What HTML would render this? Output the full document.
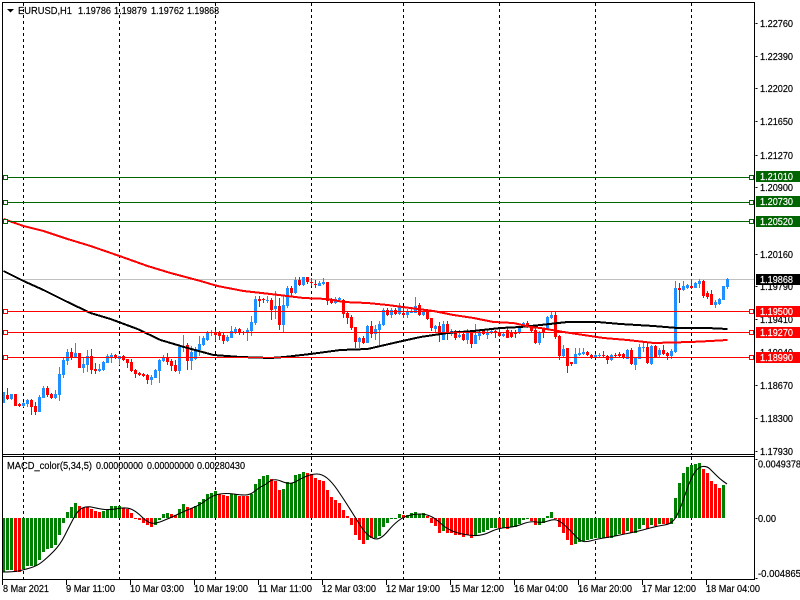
<!DOCTYPE html>
<html><head><meta charset="utf-8"><style>
html,body{margin:0;padding:0;background:#fff;width:800px;height:600px;overflow:hidden}
svg{display:block}
text{font-family:"Liberation Sans",sans-serif;font-size:10px;fill:#000;stroke:#000;stroke-width:.18px}
text.w{fill:#fff;stroke:#fff}
</style></head><body>
<svg width="800" height="600" viewBox="0 0 800 600" xmlns="http://www.w3.org/2000/svg">
<rect width="800" height="600" fill="#fff"/>
<g transform="translate(.5,0)" shape-rendering="crispEdges" fill="none">
<!-- grid -->
<path stroke="#000" stroke-dasharray="3 3" d="M23 3V454M119 3V454M215 3V454M311 3V454M403 3V454M499 3V454M595 3V454M691 3V454M23 457V579M119 457V579M215 457V579M311 457V579M403 457V579M499 457V579M595 457V579M691 457V579"/>
<!-- bid -->
<path stroke="#c0c0c0" d="M3 279.5H754"/>
<!-- candles -->
<path stroke="#1e90ff" d="M3 392V403M11 394V400M23 402V407M27 399V407M39 395V412M43 386V398M55 390V399M59 367V401M63 357V378M67 349V365M75 343V358M83 357V373M87 350V372M99 364V372M103 361V371M107 354V363M111 353V363M119 356V365M151 375V385M155 369V378M159 359V383M163 355V362M179 345V374M183 335V352M191 346V370M195 347V360M199 336V356M203 336V346M207 331V341M211 330V336M227 335V342M231 326V338M235 327V334M247 328V341M251 316V336M255 296V325M267 296V303M275 291V319M283 296V332M287 286V308M295 277V294M303 277V286M319 281V286M323 278V285M335 297V304M339 297V301M359 337V348M367 325V343M375 325V340M379 321V347M383 308V326M391 308V318M399 303V315M407 309V318M411 307V313M415 297V313M423 309V316M435 325V332M443 321V340M451 329V336M459 330V338M467 329V344M475 324V344M479 329V340M487 330V339M491 329V334M503 332V337M519 327V334M523 322V326M539 331V345M547 316V330M551 312V319M563 345V357M575 348V364M579 348V356M583 348V355M595 354V358M599 353V357M611 354V361M627 349V359M635 357V370M639 344V359M643 343V352M651 345V365M659 348V358M671 349V359M675 281V353M683 281V291M687 284V289M695 282V288M699 279V288M715 300V308M719 298V305M723 286V300M727 278V289"/>
<path stroke="#1e90ff" stroke-width="3" d="M3 392V403M11 394V399M23 403V406M27 400V404M39 397V412M43 388V398M55 394V398M59 374V395M63 360V375M67 352V361M75 353V357M83 364V368M87 356V365M99 369V371M103 362V370M107 356V363M111 355V357M119 356V359M151 377V380M155 370V378M159 360V371M163 357V361M179 347V371M183 346V348M191 352V361M195 349V359M199 344V350M203 338V345M207 333V340M211 332V333M227 337V341M231 331V338M235 329V332M247 330V333M251 322V331M255 299V323M267 300V301M275 306V309M283 305V325M287 288V306M295 280V293M303 277V285M319 283V286M323 282V284M335 299V303M339 298V300M359 338V342M367 326V343M375 329V334M379 324V330M383 310V325M391 310V315M399 307V314M407 311V315M411 311V313M415 306V313M423 311V315M435 326V329M443 324V340M451 331V334M459 335V337M467 333V340M475 335V344M479 333V336M487 333V335M491 331V333M503 334V336M519 328V333M523 323V325M539 332V343M547 317V329M551 315V318M563 349V356M575 354V364M579 353V355M583 352V354M595 355V357M599 355V356M611 355V360M627 350V359M635 358V365M639 347V359M643 347V348M651 346V364M659 350V355M671 351V356M675 288V352M683 286V290M687 285V288M695 283V288M699 281V284M715 302V305M719 299V304M723 286V300M727 279V287"/>
<path stroke="#f00" d="M7 388V400M15 394V406M19 403V407M31 399V415M35 402V415M47 386V397M51 393V399M71 348V360M79 353V368M91 349V374M95 363V374M115 354V359M123 355V361M127 359V368M131 359V372M135 369V378M139 372V376M143 373V377M147 374V384M167 353V365M171 359V371M175 360V372M187 343V370M215 330V341M219 331V340M223 333V344M239 328V335M243 331V335M259 296V307M263 298V303M271 298V320M279 298V330M291 286V297M299 277V286M307 277V284M311 278V286M315 280V288M327 282V305M331 298V304M343 299V318M347 311V324M351 315V330M355 327V348M363 336V344M371 321V338M387 308V316M395 308V315M403 307V318M419 303V316M427 309V320M431 318V331M439 322V342M447 321V340M455 330V340M463 331V341M471 330V348M483 329V335M495 330V338M499 329V337M507 328V338M511 330V338M515 330V338M527 321V328M531 326V332M535 328V344M543 328V338M555 312V339M559 335V360M567 348V373M571 362V366M587 351V356M591 354V359M603 351V357M607 355V364M615 353V357M619 352V357M623 353V359M631 348V365M647 343V364M655 345V358M663 345V355M667 352V360M679 283V303M691 279V289M703 280V298M707 291V299M711 290V305"/>
<path stroke="#f00" stroke-width="3" d="M7 395V399M15 394V406M19 404V406M31 400V407M35 406V412M47 388V395M51 394V398M71 352V358M79 353V368M91 356V370M95 369V371M115 355V358M123 356V360M127 359V363M131 362V371M135 370V374M139 373V375M143 374V376M147 375V380M167 358V362M171 361V366M175 365V371M187 345V361M215 332V335M219 332V336M223 335V341M239 329V333M243 332V333M259 299V301M263 299V300M271 300V310M279 306V325M291 288V293M299 280V285M307 277V282M311 282V283M315 284V285M327 282V301M331 299V303M343 300V314M347 313V318M351 317V328M355 327V342M363 338V343M371 326V334M387 310V315M395 310V314M403 313V315M419 305V315M427 310V319M431 318V328M439 326V335M447 324V334M455 331V338M463 334V340M471 332V344M483 331V334M495 331V332M499 333V336M507 330V338M511 333V337M515 333V334M527 323V326M531 327V331M535 330V343M543 329V332M555 315V337M559 336V356M567 348V366M571 362V364M587 352V355M591 355V357M603 355V356M607 356V360M615 355V356M619 354V356M623 354V358M631 350V364M647 347V363M655 346V357M663 350V354M667 353V356M679 288V290M691 286V288M703 281V296M707 293V297M711 294V305"/>
<!-- moving averages -->
<polyline stroke="#000" stroke-width="2" points="3,271 23,281 43,290 67,302 90,313 110,319 137,329 160,340 187,348 213,355 240,357 270,358 284,357 310,354 340,350 367,349 393,343 420,337 447,333 473,331 500,328 520,327 540,325 567,322 597,322 620,324 653,326 677,328 683,328 707,328 727,329"/>
<polyline stroke="#f00" stroke-width="2" points="3,219 23,226 43,231 67,239 90,246 119,256 147,266 170,273 200,281 217,286 243,291 270,294 303,298 327,299 343,302 367,303 387,305 410,308 433,311 453,315 473,318 493,322 513,323 530,327 540,328 563,332 583,335 603,338 627,340 653,343 690,342 710,341 727,340"/>
<!-- level lines -->
<path stroke="#006400" d="M3 177.5H754M3 202.5H754M3 221.5H754"/>
<path stroke="#f00" d="M3 311.5H754M3 332.5H754M3 357.5H754"/>
<g stroke="#006400" fill="#fff"><rect x="3" y="175.5" width="4" height="4"/><rect x="3" y="200.5" width="4" height="4"/><rect x="3" y="219.5" width="4" height="4"/><rect x="749" y="175.5" width="4" height="4"/><rect x="749" y="200.5" width="4" height="4"/><rect x="749" y="219.5" width="4" height="4"/></g>
<g stroke="#f00" fill="#fff"><rect x="3" y="309.5" width="4" height="4"/><rect x="3" y="330.5" width="4" height="4"/><rect x="3" y="355.5" width="4" height="4"/><rect x="749" y="309.5" width="4" height="4"/><rect x="749" y="330.5" width="4" height="4"/><rect x="749" y="355.5" width="4" height="4"/></g>
<!-- MACD histogram -->
<path stroke="#008000" stroke-width="3" d="M3 518V572M7 518V570M11 518V570M23 518V569M27 518V566M31 518V566M35 518V566M39 518V560M43 518V552M47 518V549M51 518V548M55 518V545M59 518V535M63 518V523M67 518V512M71 518V507M75 518V503M103 518V511M107 518V509M111 518V506M115 518V506M119 518V506M155 518V525M159 518V520M163 518V514M167 518V513M179 518V509M183 518V504M195 518V506M199 518V502M203 518V499M207 518V494M211 518V493M215 518V491M231 518V494M235 518V494M251 518V494M255 518V484M259 518V479M263 518V476M267 518V475M283 518V489M287 518V482M291 518V483M295 518V475M299 518V474M303 518V472M367 518V540M375 518V538M379 518V536M383 518V527M387 518V523M391 518V519M395 518V519M399 518V514M407 518V515M411 518V513M415 518V512M419 518V514M423 518V513M443 518V531M475 518V536M479 518V533M483 518V532M487 518V530M491 518V528M495 518V528M503 518V528M511 518V527M515 518V527M519 518V524M523 518V520M527 518V519M539 518V525M543 518V523M547 518V516M551 518V512M575 518V544M579 518V542M583 518V541M587 518V540M591 518V539M595 518V538M599 518V538M603 518V538M611 518V538M615 518V536M619 518V534M627 518V531M635 518V533M639 518V529M643 518V525M651 518V525M659 518V524M671 518V524M675 518V498M679 518V483M683 518V473M687 518V467M691 518V465M695 518V464M699 518V463M723 518V485"/>
<path stroke="#f00" stroke-width="3" d="M15 518V572M19 518V572M79 518V506M83 518V508M87 518V507M91 518V509M95 518V511M99 518V512M123 518V508M127 518V509M131 518V513M135 518V519M139 518V520M143 518V523M147 518V525M151 518V527M171 518V514M175 518V515M187 518V507M191 518V508M219 518V494M223 518V495M227 518V496M239 518V496M243 518V496M247 518V496M271 518V479M275 518V481M279 518V490M307 518V473M311 518V474M315 518V478M319 518V480M323 518V481M327 518V490M331 518V497M335 518V500M339 518V503M343 518V510M347 518V516M351 518V525M355 518V535M359 518V540M363 518V544M371 518V538M403 518V515M427 518V516M431 518V523M435 518V526M439 518V533M447 518V533M451 518V533M455 518V535M459 518V535M463 518V537M467 518V535M471 518V538M499 518V528M507 518V529M531 518V521M535 518V525M555 518V519M559 518V527M563 518V533M567 518V540M571 518V545M607 518V538M623 518V534M631 518V533M647 518V529M655 518V526M663 518V524M667 518V524M703 518V469M707 518V473M711 518V481M715 518V484M719 518V488"/>
<!-- frame -->
<path stroke="#000" d="M2 2V580M754 2V580M2 2.5H754M2 454.5H754M2 456.5H754M2 579.5H754"/>
<path stroke="#000" d="M2 580V585M66 580V585M130 580V585M194 580V585M258 580V585M322 580V585M386 580V585M450 580V585M514 580V585M578 580V585M642 580V585M706 580V585M755 23.5H757M755 56.5H757M755 88.5H757M755 121.5H757M755 155.5H757M755 187.5H757M755 254.5H757M755 286.5H757M755 319.5H757M755 385.5H757M755 418.5H757M755 451.5H757M755 459.5H757M755 518.5H757M755 578.5H757"/>
</g>
<!-- MACD signal -->
<path fill="none" stroke="#000" stroke-width="1.1" d="M3 572Q13 572 18 571Q23 570 30 568Q37 566 42 562Q47 558 53.5 551.5Q60 545 65 535Q70 525 74 517.5Q78 510 82.5 508Q87 506 93.5 507.5Q100 509 105 509.5Q110 510 118.5 508.5Q127 507 132 509.5Q137 512 142 517Q147 522 151 523Q155 524 162.5 521Q170 518 178.5 514Q187 510 193.5 507.5Q200 505 206.5 500Q213 495 220 494Q227 493 233.5 494Q240 495 245 495Q250 495 255 491Q260 487 262.5 486Q265 485 269.5 481.5Q274 478 282 481.5Q290 485 296 481.5Q302 478 307 476Q312 474 317 474Q322 474 327 478Q332 482 337.5 490Q343 498 349 507.5Q355 517 360 525Q365 533 370 536.5Q375 540 379 538.5Q383 537 388 531Q393 525 398 521Q403 517 409 515.5Q415 514 420 514Q425 514 430 516Q435 518 441.5 524Q448 530 456.5 532.5Q465 535 473.5 535.5Q482 536 490 532Q498 528 506.5 527.5Q515 527 522.5 524Q530 521 536.5 522Q543 523 548 521Q553 519 556.5 520Q560 521 565 525.5Q570 530 575 535.5Q580 541 583.5 541.5Q587 542 592 540.5Q597 539 603.5 538Q610 537 620 535Q630 533 636.5 531.5Q643 530 650 528Q657 526 664.5 525Q672 524 676 517Q680 510 685 495Q690 480 694 473.5Q698 467 702.5 466.5Q707 466 710 469Q713 472 716.5 475.5Q720 479 723.5 481.5L727 484"/>
<!-- header -->
<path d="M7 9h7l-3.5 3.5z" fill="#000"/>
<g lengthAdjust="spacingAndGlyphs">
<text x="18" y="14" textLength="54" lengthAdjust="spacingAndGlyphs">EURUSD,H1</text>
<text x="78" y="14" textLength="33" lengthAdjust="spacingAndGlyphs">1.19786</text>
<text x="114" y="14" textLength="33" lengthAdjust="spacingAndGlyphs">1.19879</text>
<text x="151" y="14" textLength="33" lengthAdjust="spacingAndGlyphs">1.19762</text>
<text x="187" y="14" textLength="32" lengthAdjust="spacingAndGlyphs">1.19868</text>
<text x="7" y="469" textLength="85" lengthAdjust="spacingAndGlyphs">MACD_color(5,34,5)</text>
<text x="96" y="469" textLength="47" lengthAdjust="spacingAndGlyphs">0.00000000</text>
<text x="147" y="469" textLength="47" lengthAdjust="spacingAndGlyphs">0.00000000</text>
<text x="197" y="469" textLength="48" lengthAdjust="spacingAndGlyphs">0.00280430</text>
</g>
<!-- y labels -->
<g>
<text x="760" y="27" textLength="33" lengthAdjust="spacingAndGlyphs">1.22760</text>
<text x="760" y="60" textLength="33" lengthAdjust="spacingAndGlyphs">1.22390</text>
<text x="760" y="92" textLength="33" lengthAdjust="spacingAndGlyphs">1.22020</text>
<text x="760" y="125" textLength="33" lengthAdjust="spacingAndGlyphs">1.21650</text>
<text x="760" y="159" textLength="33" lengthAdjust="spacingAndGlyphs">1.21270</text>
<text x="760" y="191" textLength="33" lengthAdjust="spacingAndGlyphs">1.20900</text>
<text x="760" y="258" textLength="33" lengthAdjust="spacingAndGlyphs">1.20160</text>
<text x="760" y="290" textLength="33" lengthAdjust="spacingAndGlyphs">1.19790</text>
<text x="760" y="323" textLength="33" lengthAdjust="spacingAndGlyphs">1.19410</text>
<text x="760" y="356" textLength="33" lengthAdjust="spacingAndGlyphs">1.19040</text>
<text x="760" y="389" textLength="33" lengthAdjust="spacingAndGlyphs">1.18670</text>
<text x="760" y="422" textLength="33" lengthAdjust="spacingAndGlyphs">1.18300</text>
<text x="760" y="455" textLength="33" lengthAdjust="spacingAndGlyphs">1.17930</text>
<text x="758" y="467.5" textLength="43" lengthAdjust="spacingAndGlyphs">0.0049378</text>
<text x="758" y="522" textLength="18" lengthAdjust="spacingAndGlyphs">0.00</text>
<text x="758" y="577" textLength="43" lengthAdjust="spacingAndGlyphs">-0.004865</text>
</g>
<!-- tags -->
<g shape-rendering="crispEdges">
<rect x="756" y="171" width="44" height="11" fill="#006400"/>
<rect x="756" y="196" width="44" height="11" fill="#006400"/>
<rect x="756" y="216" width="44" height="11" fill="#006400"/>
<rect x="756" y="274" width="44" height="11" fill="#000"/>
<rect x="756" y="306" width="44" height="11" fill="#f00"/>
<rect x="756" y="327" width="44" height="11" fill="#f00"/>
<rect x="756" y="352" width="44" height="11" fill="#f00"/>
</g>
<text class="w" x="760" y="180" textLength="33" lengthAdjust="spacingAndGlyphs">1.21010</text>
<text class="w" x="760" y="205" textLength="33" lengthAdjust="spacingAndGlyphs">1.20730</text>
<text class="w" x="760" y="225" textLength="33" lengthAdjust="spacingAndGlyphs">1.20520</text>
<text class="w" x="760" y="283" textLength="33" lengthAdjust="spacingAndGlyphs">1.19868</text>
<text class="w" x="760" y="315" textLength="33" lengthAdjust="spacingAndGlyphs">1.19500</text>
<text class="w" x="760" y="336" textLength="33" lengthAdjust="spacingAndGlyphs">1.19270</text>
<text class="w" x="760" y="361" textLength="33" lengthAdjust="spacingAndGlyphs">1.18990</text>
<!-- x labels -->
<text x="3" y="592" textLength="46" lengthAdjust="spacingAndGlyphs">8 Mar 2021</text>
<text x="66" y="592" textLength="49" lengthAdjust="spacingAndGlyphs">9 Mar 11:00</text>
<text x="130" y="592" textLength="54" lengthAdjust="spacingAndGlyphs">10 Mar 03:00</text>
<text x="194" y="592" textLength="54" lengthAdjust="spacingAndGlyphs">10 Mar 19:00</text>
<text x="258" y="592" textLength="54" lengthAdjust="spacingAndGlyphs">11 Mar 11:00</text>
<text x="322" y="592" textLength="54" lengthAdjust="spacingAndGlyphs">12 Mar 03:00</text>
<text x="386" y="592" textLength="54" lengthAdjust="spacingAndGlyphs">12 Mar 19:00</text>
<text x="450" y="592" textLength="54" lengthAdjust="spacingAndGlyphs">15 Mar 12:00</text>
<text x="514" y="592" textLength="54" lengthAdjust="spacingAndGlyphs">16 Mar 04:00</text>
<text x="578" y="592" textLength="54" lengthAdjust="spacingAndGlyphs">16 Mar 20:00</text>
<text x="642" y="592" textLength="54" lengthAdjust="spacingAndGlyphs">17 Mar 12:00</text>
<text x="706" y="592" textLength="54" lengthAdjust="spacingAndGlyphs">18 Mar 04:00</text>
</svg>
</body></html>
